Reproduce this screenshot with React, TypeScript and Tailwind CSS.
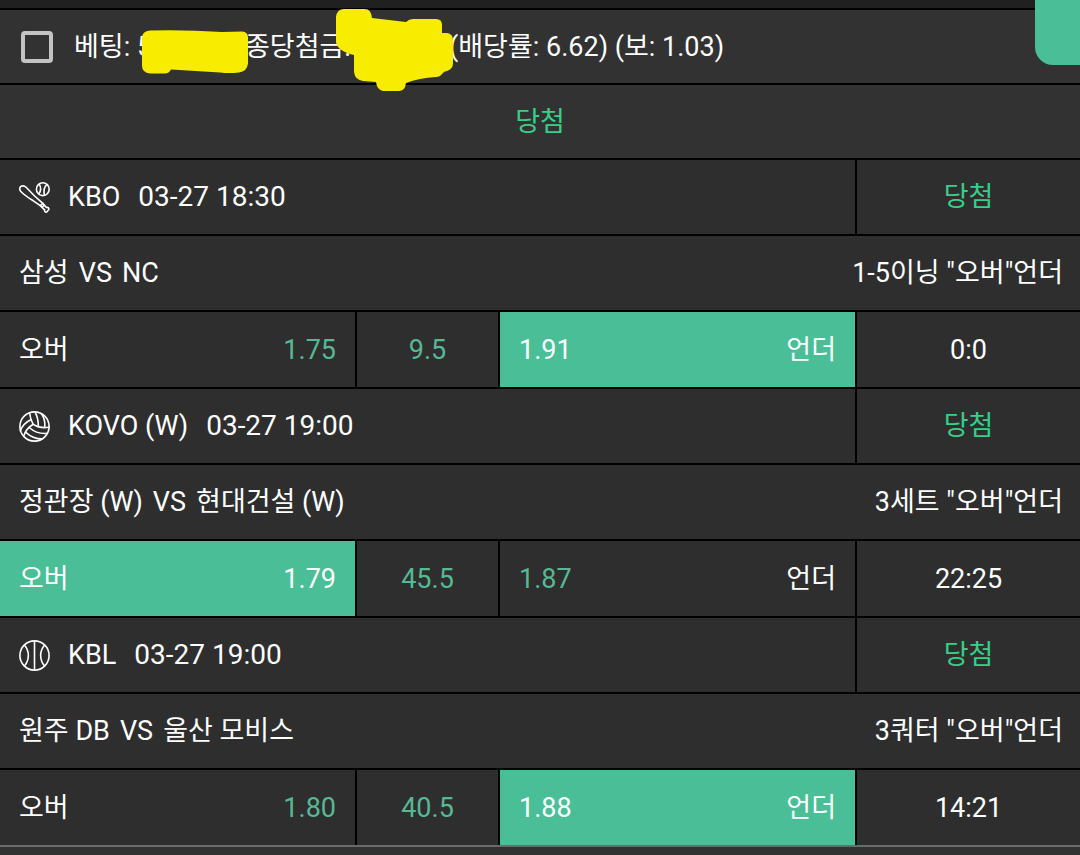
import { clsx } from "clsx";
import type { ReactNode } from "react";

type Pick = "over" | "under";

type Match = {
  icon: ReactNode;
  league: string;
  startsAt: string;
  home: string;
  away: string;
  market: string;
  over: string;
  line: string;
  under: string;
  pick: Pick;
  score: string;
};

const iconProps = {
  viewBox: "0 0 31 31",
  fill: "none",
  stroke: "currentColor",
  strokeWidth: 1.6,
  strokeLinecap: "round",
  strokeLinejoin: "round",
  className: "size-[31px] shrink-0",
  "aria-hidden": true,
} as const;

function BaseballIcon() {
  return (
    <svg {...iconProps}>
      <circle cx="23.8" cy="7.2" r="6.4" />
      <path d="M20.4 2.4c1.600 2.600 1.500 6.400-.4 9.400M27.800 2.600c-2.600 2.400-3.400 6-2.400 10.400" />
      <path d="M1.6 9.2C.2 7.2.6 5.2 2.2 4.3c1.600-.8 3.400-.5 4.900 1l8.500 8.700 8.200 7.400 3.600 4.100c1.100-.2 2.300.3 2.500 1.300.200 1.100-.6 1.500-1.100 1.800-.2.900-.9 1.600-1.900 1.500-1-.100-1.500-1.200-1.300-2.200L21.300 23.600l-7-4.800C9.200 15.600 4.800 12.600 1.600 9.200z" />
      <path d="M21.300 23.600l2.500-2.200M23 25.200l2.300-2.100" />
    </svg>
  );
}

function VolleyballIcon() {
  return (
    <svg {...iconProps}>
      <circle cx="15.5" cy="15.5" r="14.6" />
      <path d="M10.600 1.700c.4 4.400 1.600 8.300 3.600 11.600 4.600 3 10.200 4 15.700 2.900" />
      <path d="M16 1c2.400 4.400 3.400 9 3.300 14.200M22.400 2.800c2.800 3.900 3.800 8.300 3.300 13.300" />
      <path d="M14.200 13.300c-4.600 2.700-7.900 6.800-9.500 11.800M12.300 8.500C7 10.900 3.200 14.800 1.400 19.800" />
      <path d="M10.100 16.500c5.400 4.600 11.600 6.600 18.300 5.900M6.800 21.300c4.800 4.400 10.200 6.600 16.200 6.600" />
    </svg>
  );
}

function BasketballIcon() {
  return (
    <svg {...iconProps}>
      <circle cx="15.5" cy="15.5" r="14.6" />
      <path d="M15.500 1v29M5.600 5.200c5 6 5 14.600 0 20.600M25.400 5.200c-5 6-5 14.600 0 20.600" />
    </svg>
  );
}

const matches: Match[] = [
  {
    icon: <BaseballIcon />,
    league: "KBO",
    startsAt: "03-27 18:30",
    home: "삼성",
    away: "NC",
    market: '1-5이닝 "오버"언더',
    over: "1.75",
    line: "9.5",
    under: "1.91",
    pick: "under",
    score: "0:0",
  },
  {
    icon: <VolleyballIcon />,
    league: "KOVO (W)",
    startsAt: "03-27 19:00",
    home: "정관장 (W)",
    away: "현대건설 (W)",
    market: '3세트 "오버"언더',
    over: "1.79",
    line: "45.5",
    under: "1.87",
    pick: "over",
    score: "22:25",
  },
  {
    icon: <BasketballIcon />,
    league: "KBL",
    startsAt: "03-27 19:00",
    home: "원주 DB",
    away: "울산 모비스",
    market: '3쿼터 "오버"언더',
    over: "1.80",
    line: "40.5",
    under: "1.88",
    pick: "under",
    score: "14:21",
  },
];

// Marker strokes that hide the stake and the payout
function Redaction() {
  return (
    <svg
      viewBox="136 6 320 88"
      fill="#f8ec00"
      className="absolute -top-1 left-[136px] h-[88px] w-80"
      aria-hidden="true"
    >
      <path d="M142 38q0-7 8-7.500 34-1 72 1.500l20-.5q6 .5 6 6v26q-1 8-9 9-10 1-19 0l-49-3q-2 4-6 4h-15q-8-1-8-8z" />
      <path d="M336 17q1-8 8-8h21q6 0 7 9l34 4q3-3 7-3h23q6 0 6 6v8h5q6 1 6 7v23q0 6-6 8-3 0-5 3-2 3-6 3-17 1-30 6-1 8-7 8h-16q-6-1-7-9l-13-1q-8-1-9-9V55q-17-4-18-13z" />
    </svg>
  );
}

function MatchRows({ match }: { match: Match }) {
  const overPicked = match.pick === "over";
  const underPicked = match.pick === "under";

  return (
    <section className="flex flex-col gap-0.5">
      <div className="grid h-[74px] grid-cols-[857fr_223fr]">
        <div className="flex items-center border-r-2 border-black bg-[#2e2e2e] px-[19px]">
          {match.icon}
          <span className="ml-[18px]">{match.league}</span>
          <span className="ml-[18px] text-[28px]">{match.startsAt}</span>
        </div>
        <div className="flex items-center justify-center bg-[#2e2e2e] text-[#36d088]">당첨</div>
      </div>

      <div className="flex h-[74px] items-center justify-between bg-[#2e2e2e] pr-[17px] pl-[19px]">
        <h2 className="flex gap-2.5">
          <span>{match.home}</span>
          <span>VS</span>
          <span>{match.away}</span>
        </h2>
        <span>{match.market}</span>
      </div>

      <div className="grid h-[75px] grid-cols-[357fr_143fr_357fr_223fr] text-[#57b894]">
        <div
          className={clsx(
            "flex items-center justify-between border-r-2 border-black px-[19px]",
            overPicked ? "bg-[#4abf97]" : "bg-[#2e2e2e]",
          )}
        >
          <span className="text-white">오버</span>
          <span className={clsx(overPicked && "text-white")}>{match.over}</span>
        </div>
        <div className="flex items-center justify-center border-r-2 border-black bg-[#2e2e2e]">
          {match.line}
        </div>
        <div
          className={clsx(
            "flex items-center justify-between border-r-2 border-black px-[19px]",
            underPicked ? "bg-[#4abf97]" : "bg-[#2e2e2e]",
          )}
        >
          <span className={clsx(underPicked && "text-white")}>{match.under}</span>
          <span className="text-white">언더</span>
        </div>
        <div className="flex items-center justify-center bg-[#2e2e2e] text-white">
          {match.score}
        </div>
      </div>
    </section>
  );
}

export default function App() {
  return (
    <main className="relative min-h-screen overflow-hidden bg-[#323232] font-['Roboto','Noto_Sans_CJK_KR',sans-serif] text-[27px] leading-8 whitespace-nowrap text-white">
      <div className="h-2 bg-[#202020]" />

      <article className="flex flex-col gap-0.5 border-t-2 border-b-2 border-t-black border-b-[#6b6b6b] bg-black">
        <header className="relative flex h-[73px] items-center bg-[#323232] pl-[21px]">
          <label className="flex items-center">
            <input
              type="checkbox"
              className="size-8 shrink-0 appearance-none rounded-sm border-4 border-[#c3c3c3] checked:bg-[#4abf97]"
            />
            <span className="ml-[21px] w-[171px]">베팅: 5</span>
          </label>
          <span className="w-[204px]">종당첨금:</span>
          <span>(배당률: 6.62) (보: 1.03)</span>
          <Redaction />
        </header>
        <div className="flex h-[73px] items-center justify-center bg-[#323232] text-[#36d088]">
          당첨
        </div>
        {matches.map((match) => (
          <MatchRows key={match.league} match={match} />
        ))}
      </article>

      <button
        type="button"
        aria-label="메뉴"
        className="absolute top-0 right-0 h-[65px] w-[45px] rounded-bl-[18px] bg-[#4abf97]"
      />
    </main>
  );
}
